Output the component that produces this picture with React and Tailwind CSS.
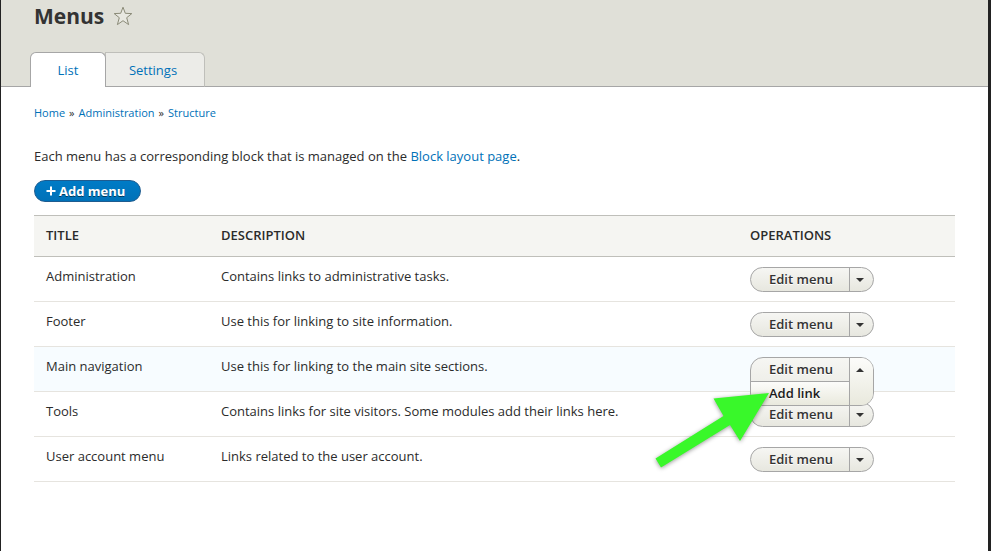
import React from "react";

const menus = [
  { title: "Administration", description: "Contains links to administrative tasks." },
  { title: "Footer", description: "Use this for linking to site information." },
  { title: "Main navigation", description: "Use this for linking to the main site sections.", open: true },
  { title: "Tools", description: "Contains links for site visitors. Some modules add their links here." },
  { title: "User account menu", description: "Links related to the user account." },
];

function StarIcon() {
  return (
    <svg width="20" height="20" viewBox="0 0 20 20" fill="#e8e8e1" stroke="#8b8b78" strokeWidth="1" strokeLinejoin="round">
      <path d="M10 1.2 L12.3 7.3 L18.8 7.6 L13.7 11.7 L15.6 18.6 L10 14.7 L4.4 18.6 L6.3 11.7 L1.2 7.6 L7.7 7.3 Z" />
    </svg>
  );
}

function Caret({ up }) {
  return (
    <svg width="8" height="4" viewBox="0 0 8 4" fill="#333333">
      {up ? <path d="M0 4 L4 0 L8 4 Z" /> : <path d="M0 0 L4 4 L8 0 Z" />}
    </svg>
  );
}

function PointerArrow() {
  return (
    <svg
      className="pointer-events-none absolute -left-[98px] top-[32px] z-20 drop-shadow-[0_1px_2px_rgba(0,0,0,0.4)]"
      width="120"
      height="84"
      viewBox="652 389 120 84"
      fill="#39f82a"
    >
      <path d="M769 393 L740 441 L730 425 L661 467.5 L655.5 458.5 L723.5 416 L713.5 398.5 Z" />
    </svg>
  );
}

function DropButton({ title, open }) {
  return (
    <div className="relative h-[25px] w-[124px]">
      <div
        className={`absolute left-0 top-0 flex w-full overflow-hidden rounded-[13px] border border-[#a6a6a6] bg-linear-to-b from-[#f6f6f3] to-[#e7e7df] ${open ? "z-10 h-[49px]" : "h-[25px]"}`}
      >
        <div className="flex flex-1 flex-col">
          <button type="button" className="h-[23px] w-full pl-[18px] text-left text-[13px] leading-[23px] font-semibold text-[#333] [text-shadow:0_1px_#fff]">
            Edit menu
          </button>
          {open && (
            <button type="button" className="h-6 w-full border-t border-[#a6a6a6] bg-linear-to-b from-[#fcfcfa] to-[#e9e9dd] pl-[18px] text-left text-[13px] leading-[23px] font-semibold text-[#1a1a1a] [text-shadow:0_1px_#fff]">
              Add link
            </button>
          )}
        </div>
        <button
          type="button"
          aria-label={`List additional actions for ${title}`}
          aria-expanded={!!open}
          className={`flex w-6 border-l border-[#a6a6a6] pt-[10px] pl-[6px] ${open ? "bg-linear-to-b from-[#fcfcfa] to-[#e9e9dd]" : ""}`}
        >
          <Caret up={open} />
        </button>
      </div>
      {open && <PointerArrow />}
    </div>
  );
}

export default function App() {
  return (
    <div className="min-h-screen border-l border-r-3 border-l-[#222] border-r-[#222] bg-white font-['Open_Sans','Noto_Sans',sans-serif] text-[13px] leading-5 text-[#2b2b2b]">
      <header className="border-b border-[#a6a6a6] bg-[#e0e0d8] pt-1">
        <div className="flex h-6 items-center gap-[9px] pl-[33px]">
          <h1 className="text-[21px] leading-6 font-bold text-[#333]">Menus</h1>
          <button type="button" aria-label="Add to shortcuts">
            <StarIcon />
          </button>
        </div>
        <nav aria-label="Tabs" className="mt-6 -mb-px flex pl-[29px]">
          <a href="#list" aria-current="page" className="z-10 h-[35px] w-[76px] rounded-t-md border border-b-0 border-[#a6a6a6] bg-white text-center text-[13px] leading-[34px] text-[#0071b8]">
            List
          </a>
          <a href="#settings" className="-ml-px h-[35px] w-[100px] rounded-tr-md border border-[#bfbfba] border-b-[#a6a6a6] bg-[#ecece8] pr-1 text-center text-[13px] leading-[34px] text-[#0071b8]">
            Settings
          </a>
        </nav>
      </header>

      <main className="pt-4 pr-[33px] pl-[33px]">
        <nav aria-label="Breadcrumb" className="flex gap-1 text-[11px] leading-5">
          <a href="#home" className="text-[#0071b8]">Home</a>
          <span>»</span>
          <a href="#administration" className="text-[#0071b8]">Administration</a>
          <span>»</span>
          <a href="#structure" className="text-[#0071b8]">Structure</a>
        </nav>

        <p className="mt-[23px]">
          Each menu has a corresponding block that is managed on the{" "}
          <a href="#block-layout" className="text-[#0071b8]">Block layout page</a>.
        </p>

        <button type="button" className="mt-[14px] flex h-[22px] w-[107px] items-center gap-[3px] rounded-full border border-[#1e5c90] bg-linear-to-b from-[#007bc6] to-[#0071b8] pl-[11px] text-[13px] font-bold text-white [text-shadow:0_1px_rgba(0,0,0,0.5)]">
          <svg width="10" height="10" viewBox="0 0 10 10" fill="#fff">
            <path d="M4 0.5 h2 v3.5 h3.5 v2 h-3.5 v3.5 h-2 v-3.5 h-3.5 v-2 h3.5 Z" />
          </svg>
          Add menu
        </button>

        <table className="mt-[13px] w-full table-fixed border-separate border-spacing-0 text-left">
          <thead className="bg-[#f5f5f2]">
            <tr className="h-[42px] uppercase">
              <th scope="col" className="w-[19%] border-y border-[#bfbfba] px-3 pb-[2px] font-semibold">Title</th>
              <th scope="col" className="border-y border-[#bfbfba] px-3 pb-[2px] font-semibold">Description</th>
              <th scope="col" className="w-[217px] border-y border-[#bfbfba] px-3 pb-[2px] font-semibold">Operations</th>
            </tr>
          </thead>
          <tbody>
            {menus.map((menu) => (
              <tr key={menu.title} className={`h-[45px] align-top ${menu.open ? "bg-[#f7fcff]" : ""}`}>
                <td className="border-b border-[#e6e4df] px-3 pt-[9px]">{menu.title}</td>
                <td className="border-b border-[#e6e4df] px-3 pt-[9px]">{menu.description}</td>
                <td className="border-b border-[#e6e4df] px-3 pt-[10px]">
                  <DropButton title={menu.title} open={menu.open} />
                </td>
              </tr>
            ))}
          </tbody>
        </table>
      </main>
    </div>
  );
}
